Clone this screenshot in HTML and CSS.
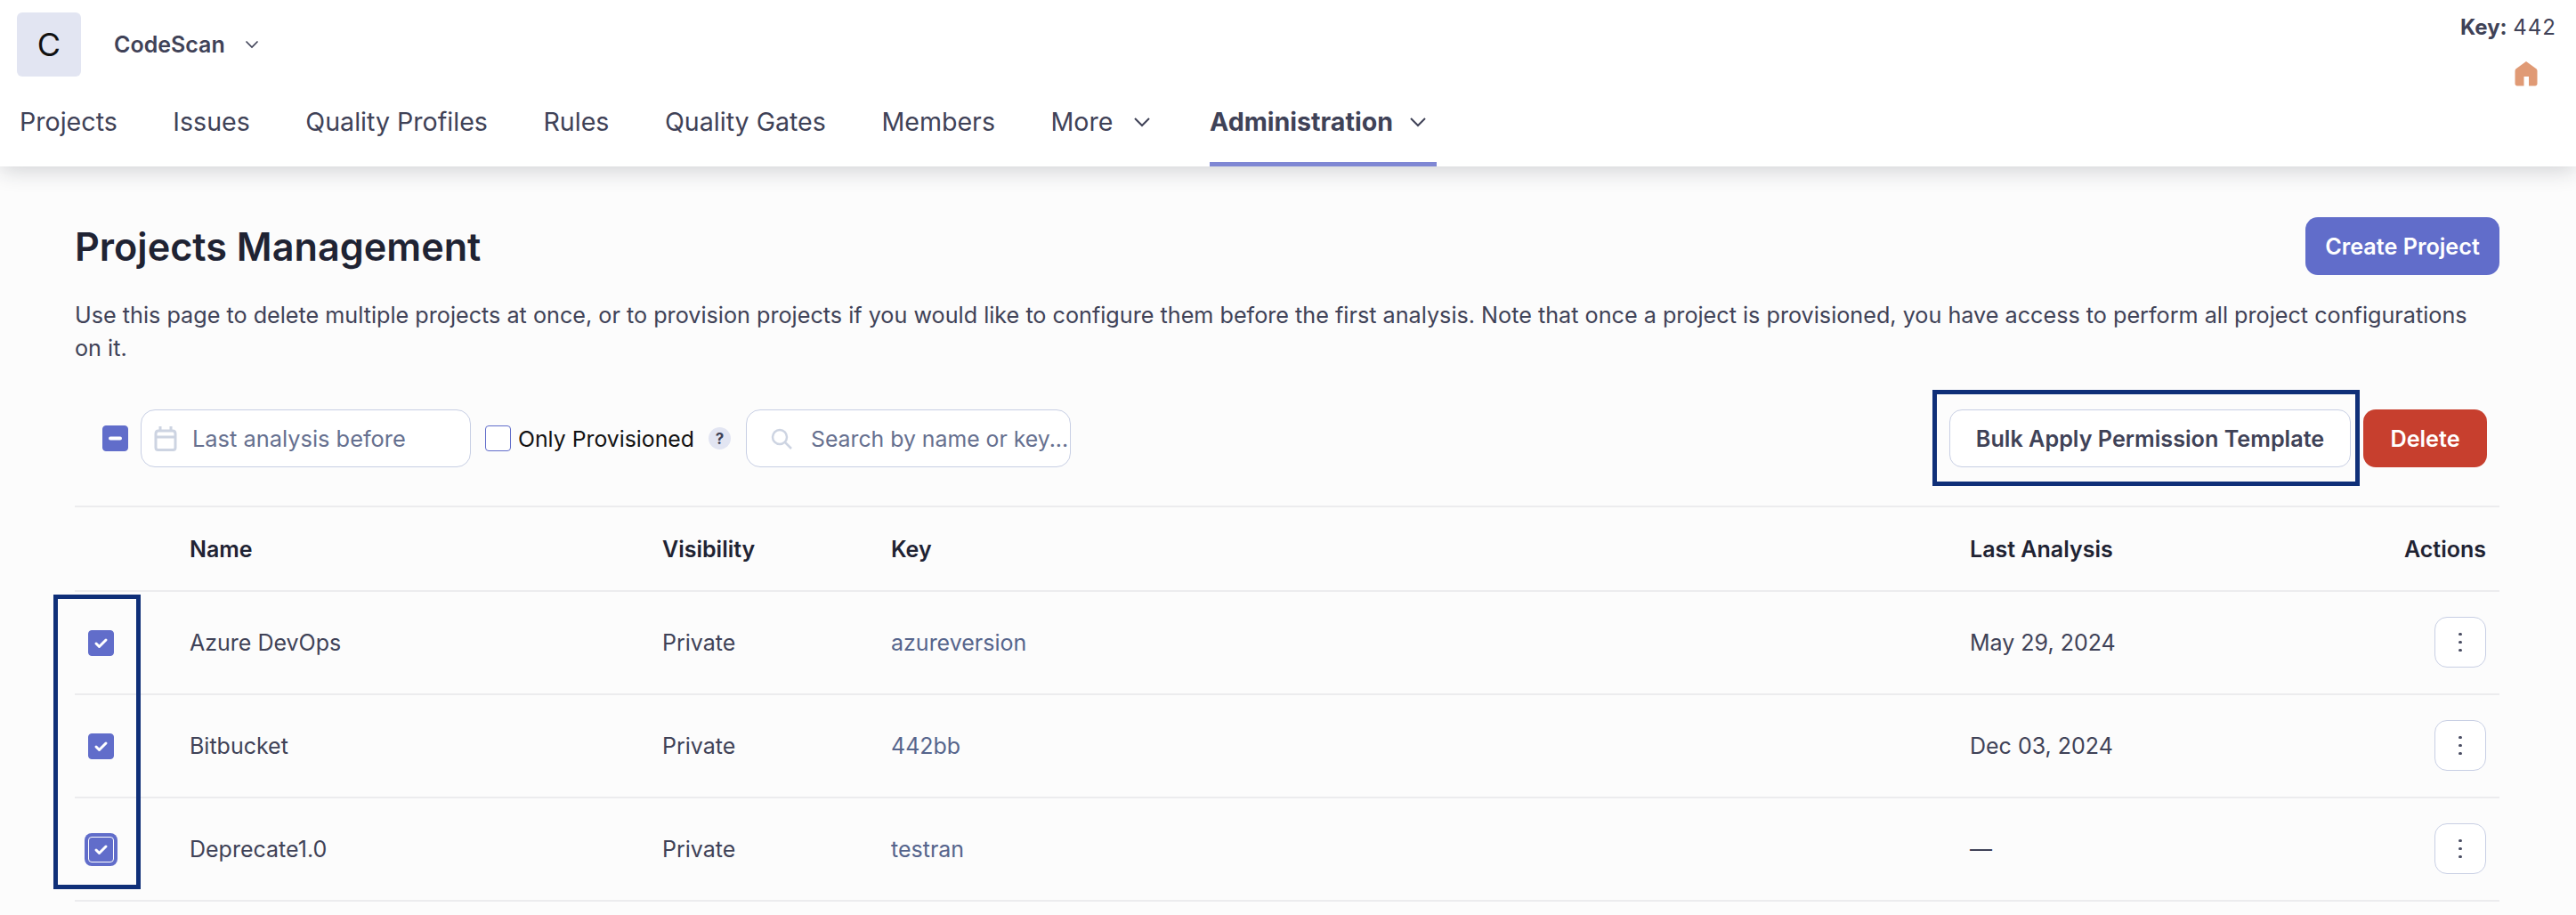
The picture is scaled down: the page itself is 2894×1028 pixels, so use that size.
FILE: index.html
```html
<!DOCTYPE html>
<html lang="en">
<head>
  <meta charset="UTF-8" />
  <title>Projects Management</title>
  <link rel="stylesheet" href="styles.css">
</head>
<body>
  <header class="topbar">
    <div class="topbar-row">
      <div class="org">
        <div class="org-logo">C</div>
        <span class="org-name">CodeScan</span>
        <svg class="org-chevron" viewBox="0 0 16 10"><path d="M1.5 1.5 8 8l6.5-6.5"/></svg>
      </div>
      <div class="org-key">
        <div><b>Key:</b> <span class="key-value">442</span></div>
        <svg class="home-icon" viewBox="0 0 26 28"><path d="M13 0 24 8c1 .8 1.500 1.700 1.500 3v14c0 1.500-1 2.500-2.500 2.500h-7V17h-5.500v10.500H3C1.500 27.500.5 26.500.5 25V11C.5 9.700 1 8.800 2 8z"/></svg>
      </div>
    </div>
    <nav class="nav">
      <a class="nav-item">Projects</a>
      <a class="nav-item">Issues</a>
      <a class="nav-item">Quality Profiles</a>
      <a class="nav-item">Rules</a>
      <a class="nav-item">Quality Gates</a>
      <a class="nav-item">Members</a>
      <a class="nav-item nav-more">More <svg class="nav-chevron" viewBox="0 0 18 11"><path d="M1 1l8 8 8-8"/></svg></a>
      <a class="nav-item active">Administration <svg class="nav-chevron" viewBox="0 0 18 11"><path d="M1 1l8 8 8-8"/></svg></a>
    </nav>
  </header>

  <main class="content">
    <div class="title-row">
      <h1>Projects Management</h1>
      <button class="btn btn-primary">Create Project</button>
    </div>
    <p class="intro">Use this page to delete multiple projects at once, or to provision projects if you would like to configure them before the first analysis. Note that once a project is provisioned, you have access to perform all project configurations on it.</p>

    <div class="toolbar">
      <span class="check checked"><svg viewBox="0 0 29 29"><path class="minus" d="M9 14.500h11"/></svg></span>
      <div class="field date-field">
        <svg class="field-icon" viewBox="0 0 26 29"><path d="M7 1v4M19 1v4M2 9.500c0-2 1-3.500 3-3.500h16c2 0 3 1.500 3 3.500V25c0 1.500-1 2.500-2.500 2.500h-17C3 27.500 2 26.500 2 25zM2 13h22"/></svg>
        <span class="placeholder">Last analysis before</span>
      </div>
      <span class="check"></span>
      <span class="check-label">Only Provisioned</span>
      <span class="help">?</span>
      <div class="field search-field">
        <svg class="search-icon" viewBox="0 0 24 24"><circle cx="10" cy="10" r="8"/><path d="M16 16l7 7"/></svg>
        <span class="placeholder">Search by name or key...</span>
      </div>
      <div class="toolbar-actions">
        <button class="btn btn-outline">Bulk Apply Permission Template</button>
        <button class="btn btn-danger">Delete</button>
      </div>
    </div>

    <div class="grid grid-head">
      <div></div>
      <div>Name</div>
      <div>Visibility</div>
      <div>Key</div>
      <div>Last Analysis</div>
      <div class="cell-end">Actions</div>
    </div>

    <div class="grid">
      <div class="cell-check"><span class="check checked"><svg viewBox="0 0 29 29"><path class="tick" d="M9 16l3.500 3.500 7.500-7.500"/></svg></span></div>
      <div>Azure DevOps</div>
      <div>Private</div>
      <div class="key-link">azureversion</div>
      <div>May 29, 2024</div>
      <div class="cell-end"><button class="more-btn"><i></i><i></i><i></i></button></div>
    </div>
    <div class="grid">
      <div class="cell-check"><span class="check checked"><svg viewBox="0 0 29 29"><path class="tick" d="M9 16l3.500 3.500 7.500-7.500"/></svg></span></div>
      <div>Bitbucket</div>
      <div>Private</div>
      <div class="key-link">442bb</div>
      <div>Dec 03, 2024</div>
      <div class="cell-end"><button class="more-btn"><i></i><i></i><i></i></button></div>
    </div>
    <div class="grid">
      <div class="cell-check"><span class="check checked focused"><svg viewBox="0 0 29 29"><path class="tick" d="M9 16l3.500 3.500 7.500-7.500"/></svg></span></div>
      <div>Deprecate1.0</div>
      <div>Private</div>
      <div class="key-link">testran</div>
      <div>—</div>
      <div class="cell-end"><button class="more-btn"><i></i><i></i><i></i></button></div>
    </div>
  </main>

  <div class="callout callout-bulk"></div>
  <div class="callout callout-checks"></div>
</body>
</html>
```

FILE: styles.css
```css
* {
  box-sizing: border-box;
}

html, body {
  height: 100%;
}

body {
  margin: 0;
  background: #fcfcfc;
  font-family: Inter, "Noto Sans", sans-serif;
  color: #3f4257;
  overflow: hidden;
  position: relative;
}

/* top bar */
.topbar {
  height: 187px;
  background: #fff;
  box-shadow: 0 4px 24px rgba(30, 35, 50, 0.2);
  position: relative;
}

.topbar-row {
  height: 102px;
  display: flex;
  justify-content: space-between;
  padding: 14px 22px 0 19px;
}

.org {
  display: flex;
  align-items: center;
  height: 72px;
}

.org-logo {
  width: 72px;
  height: 72px;
  border-radius: 6px;
  background: #e2e5f2;
  color: #111;
  font-size: 36px;
  display: flex;
  align-items: center;
  justify-content: center;
}

.org-name {
  margin-left: 37px;
  font-size: 25px;
  font-weight: 600;
}

.org-chevron {
  width: 16px;
  height: 10px;
  margin-left: 22px;
  fill: none;
  stroke: #3f4257;
  stroke-width: 1.6;
}

.org-key {
  margin-top: 2px;
  font-size: 24px;
  display: flex;
  flex-direction: column;
  align-items: flex-end;
}

.org-key b {
  font-weight: 700;
}

.key-value {
  letter-spacing: 1px;
}

.home-icon {
  width: 26px;
  height: 28px;
  margin: 24px 21px 0 0;
  fill: #e09a75;
}

.nav {
  height: 85px;
  display: flex;
  padding-left: 22px;
  gap: 62.500px;
}

.nav-item {
  height: 85px;
  padding-top: 18px;
  font-size: 28.600px;
  line-height: 34px;
  white-space: nowrap;
}

.nav-more {
  padding-right: 4px;
}

.nav-more .nav-chevron {
  margin-left: 16px;
}

.nav-item.active {
  font-weight: 700;
  padding-right: 12px;
  border-bottom: 5px solid #7f87d4;
}

.nav-chevron {
  width: 18px;
  height: 11px;
  margin-left: 12px;
  vertical-align: 4px;
  fill: none;
  stroke: #3f4257;
  stroke-width: 2;
}

/* page content */
.content {
  padding: 57px 86px 0 84px;
}

.title-row {
  display: flex;
  justify-content: space-between;
  align-items: center;
  height: 65px;
}

h1 {
  margin: 0;
  font-size: 43.200px;
  font-weight: 600;
  color: #1f2333;
}

.intro {
  margin: 27px 0 0;
  font-size: 25.200px;
  line-height: 37px;
  color: #3f4257;
}

.btn {
  height: 65px;
  border-radius: 14px;
  font-family: inherit;
  font-size: 25.200px;
  font-weight: 600;
  border: none;
  padding: 0;
}

.btn-primary {
  width: 218px;
  background: #616dca;
  color: #fff;
}

.btn-outline {
  width: 451px;
  background: #fff;
  border: 1.500px solid #c8cfe4;
  color: #3f4257;
}

.btn-danger {
  width: 139px;
  background: #c73f2e;
  color: #fff;
}

.toolbar {
  display: flex;
  align-items: center;
  margin-top: 50px;
  padding: 0 14px 43px 31px;
  border-bottom: 2px solid #ececee;
}

.check {
  flex: none;
  display: inline-block;
  width: 29px;
  height: 29px;
  border-radius: 4px;
  border: 1.500px solid #616dca;
  background: #fff;
}

.check svg {
  display: block;
  width: 29px;
  height: 29px;
  margin: -1.500px;
  fill: none;
  stroke: #fff;
  stroke-linecap: round;
  stroke-linejoin: round;
}

.check.checked {
  background: #616dca;
}

.minus {
  stroke-width: 4;
}

.tick {
  stroke-width: 3;
}

.check.focused {
  border-color: #fff;
  box-shadow: 0 0 0 4px #616dca;
}

.field {
  height: 65px;
  flex: none;
  display: flex;
  align-items: center;
  background: #fff;
  border: 1.500px solid #c8cfe4;
  border-radius: 16px;
  font-size: 25.400px;
  color: #66708f;
  white-space: nowrap;
}

.date-field {
  width: 371px;
  margin: 0 16px 0 14px;
  padding-left: 14px;
}

.field-icon {
  width: 26px;
  height: 29px;
  margin-right: 17px;
  fill: none;
  stroke: #cdd4e2;
  stroke-width: 3;
}

.check-label {
  margin-left: 8px;
  font-size: 24.800px;
  color: #111;
}

.help {
  width: 25px;
  height: 25px;
  margin: 0 17px 0 16px;
  flex: none;
  border-radius: 50%;
  background: #e2e5f2;
  color: #3f4257;
  font-size: 17px;
  font-weight: 700;
  display: flex;
  align-items: center;
  justify-content: center;
}

.search-field {
  width: 365px;
  padding-left: 27px;
  font-size: 24.800px;
}

.search-icon {
  width: 24px;
  height: 24px;
  margin-right: 21px;
  flex: none;
  fill: none;
  stroke: #cdd4e2;
  stroke-width: 2.500;
}

.toolbar-actions {
  margin-left: auto;
  display: flex;
  gap: 14px;
}

/* project table */
.grid {
  display: grid;
  grid-template-columns: 129px 531px 257px 1212px 1fr auto;
  align-items: center;
  height: 116px;
  padding-right: 15px;
  border-bottom: 2px solid #ececee;
  font-size: 25px;
  color: #3f4257;
}

.grid-head {
  height: 95px;
  font-weight: 600;
  color: #1f2333;
}

.cell-check {
  padding-left: 15px;
  display: flex;
}

.cell-end {
  display: flex;
  justify-content: flex-end;
}

.key-link {
  color: #56658c;
}

.more-btn {
  width: 58px;
  height: 57px;
  margin-bottom: 1px;
  display: inline-flex;
  flex-direction: column;
  align-items: center;
  justify-content: center;
  gap: 5.500px;
  padding: 0;
  background: #fff;
  border: 1.500px solid #c8cfe4;
  border-radius: 14px;
}

.more-btn i {
  width: 3.500px;
  height: 3.500px;
  border-radius: 50%;
  background: #4a4d63;
}

/* annotation boxes drawn over the screenshot */
.callout {
  position: absolute;
  border: 5px solid #0f2f78;
}

.callout-bulk {
  left: 2171px;
  top: 438px;
  width: 480px;
  height: 108px;
}

.callout-checks {
  left: 60px;
  top: 668px;
  width: 98px;
  height: 331px;
}
```
